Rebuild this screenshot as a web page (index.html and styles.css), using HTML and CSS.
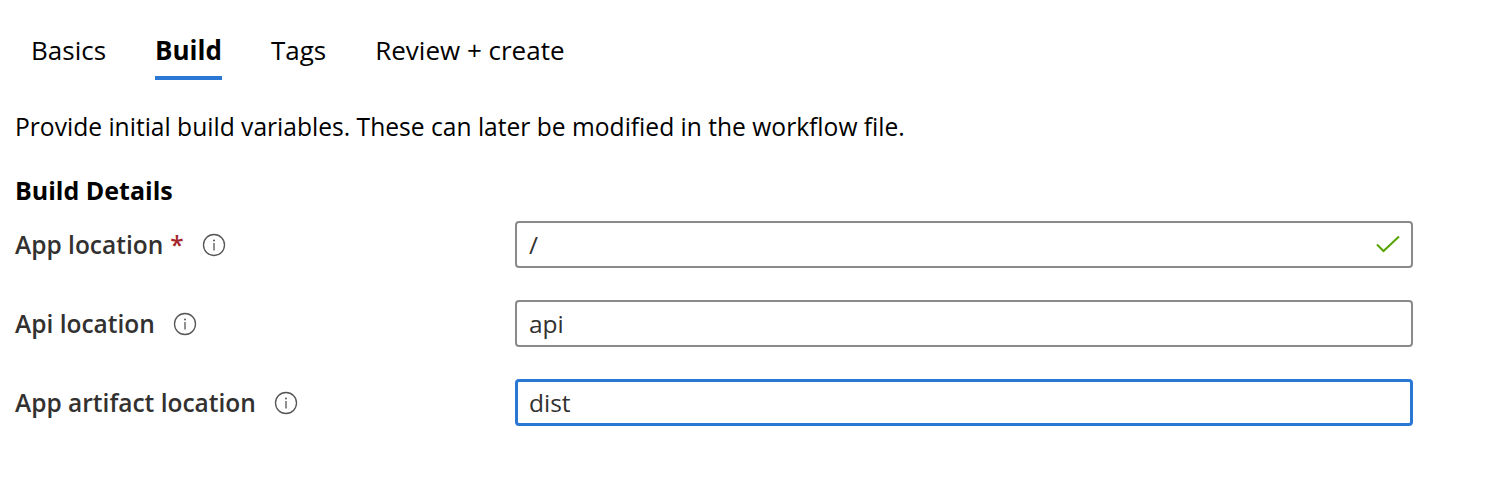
FILE: index.html
```html
<!DOCTYPE html>
<html>
<head>
<meta charset="utf-8">
<link rel="stylesheet" href="styles.css">
</head>
<body>
<div class="page">
  <nav class="tabs">
    <div class="tab">Basics</div>
    <div class="tab active">Build</div>
    <div class="tab">Tags</div>
    <div class="tab">Review + create</div>
  </nav>
  <p class="desc">Provide initial build variables. These can later be modified in the workflow file.</p>
  <h2 class="section">Build Details</h2>
  <div class="form">
    <div class="row">
      <div class="label"><span>App location</span><span class="req">*</span>
        <svg class="info" width="24" height="24" viewBox="0 0 24 24"><circle cx="12" cy="12" r="10.5" fill="none" stroke="#555" stroke-width="1.3"/><circle cx="12" cy="7.6" r="1" fill="#555"/><rect x="11.35" y="10" width="1.3" height="7.5" fill="#555"/></svg>
      </div>
      <div class="field">
        <div class="input ok"><span>/</span>
          <svg class="check" width="24" height="20" viewBox="0 0 24 20"><path d="M1 9.5 L7.5 16 L23 1.5" fill="none" stroke="#57a300" stroke-width="2"/></svg>
        </div>
      </div>
    </div>
    <div class="row">
      <div class="label"><span>Api location</span>
        <svg class="info" width="24" height="24" viewBox="0 0 24 24"><circle cx="12" cy="12" r="10.5" fill="none" stroke="#555" stroke-width="1.3"/><circle cx="12" cy="7.6" r="1" fill="#555"/><rect x="11.35" y="10" width="1.3" height="7.5" fill="#555"/></svg>
      </div>
      <div class="field"><div class="input"><span>api</span></div></div>
    </div>
    <div class="row">
      <div class="label"><span>App artifact location</span>
        <svg class="info" width="24" height="24" viewBox="0 0 24 24"><circle cx="12" cy="12" r="10.5" fill="none" stroke="#555" stroke-width="1.3"/><circle cx="12" cy="7.6" r="1" fill="#555"/><rect x="11.35" y="10" width="1.3" height="7.5" fill="#555"/></svg>
      </div>
      <div class="field"><div class="input focus"><span>dist</span></div></div>
    </div>
  </div>
</div>
</body>
</html>
```
FILE: styles.css
```css
html, body {
  margin: 0;
  padding: 0;
  background: #fff;
}
body {
  font-family: "Open Sans", "Noto Sans", sans-serif;
  color: #000;
}
.page {
  padding: 0 0 0 15px;
  width: 1400px;
}
.tabs {
  display: flex;
  gap: 49px;
  padding-left: 16px;
  height: 84px;
  align-items: flex-start;
}
.tab {
  font-size: 26px;
  line-height: 34px;
  padding: 33px 0 13px;
  color: #000;
}
.tab.active {
  font-weight: 700;
  box-shadow: inset 0 -4px 0 #2b78d4;
}
.desc {
  margin: 27px 0 0;
  font-size: 24.6px;
  line-height: 32px;
  color: #000;
}
.section {
  margin: 31px 0 0;
  font-size: 25px;
  line-height: 32px;
  font-weight: 700;
}
.form {
  display: flex;
  flex-direction: column;
  gap: 32px;
  margin-top: 15px;
}
.row {
  display: flex;
  align-items: center;
  height: 47px;
}
.label {
  width: 500px;
  display: flex;
  align-items: center;
  font-size: 24.5px;
  font-weight: 600;
  color: #323130;
}
.req {
  color: #a4262c;
  margin-left: 7px;
}
.info {
  margin-left: 18px;
  flex: none;
}
.field {
  width: 898px;
}
.input {
  box-sizing: border-box;
  height: 47px;
  border: 2px solid #8a8a8a;
  border-radius: 4px;
  display: flex;
  align-items: center;
  justify-content: space-between;
  padding: 0 11px 0 12px;
  font-size: 24.5px;
  color: #323130;
}
.input.focus {
  border: 3px solid #2b78d4;
  padding-left: 11px;
}
.check {
  flex: none;
}
```
